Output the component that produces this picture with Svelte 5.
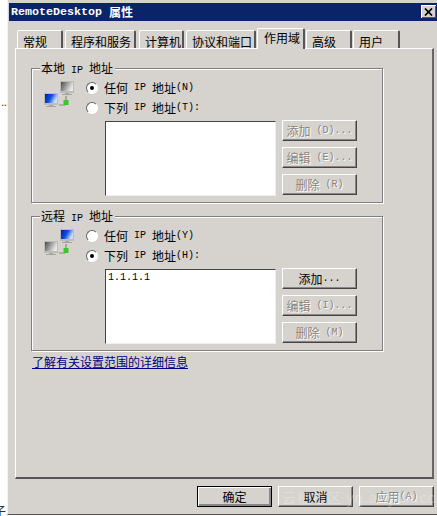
<script>
  const tabs = ['常规', '程序和服务', '计算机', '协议和端口', '作用域', '高级', '用户'];
</script>

{#snippet netIcon(topBlue)}
  <svg class="net" width="34" height="32" viewBox="0 0 34 32" aria-hidden="true">
    <defs>
      <linearGradient id={topBlue ? 'g1a' : 'g2a'} x1="0" x2="1" y1="0" y2="0.4">
        <stop offset="0" stop-color="#4a4a4a" /><stop offset="1" stop-color="#e8e8e8" />
      </linearGradient>
      <linearGradient id={topBlue ? 'b1a' : 'b2a'} x1="0" x2="1" y1="0" y2="0.4">
        <stop offset="0" stop-color="#0018b0" /><stop offset="0.55" stop-color="#1050e0" /><stop offset="1" stop-color="#c8dcff" />
      </linearGradient>
    </defs>
    <path d="M22 15v7h-1v2h-6" fill="none" stroke="#8a8a86" stroke-width="1.2" />
    <rect x="16" y="0" width="14" height="12" fill="#bdbdb8" />
    <rect x="17" y="1" width="12" height="9" fill="url(#{topBlue ? 'b1a' : 'g1a'})" />
    <path d="M21 12h4v1h3v1h-10v-1h3z" fill="#a5a5a0" />
    <rect x="0" y="12" width="14" height="12" fill="#bdbdb8" />
    <rect x="1" y="13" width="12" height="9" fill="url(#{topBlue ? 'g2a' : 'b2a'})" />
    <path d="M5 24h4v1h3v1H2v-1h3z" fill="#a5a5a0" />
    <rect x="19.5" y="19" width="5" height="5" fill="#38c828" />
  </svg>
{/snippet}

{#snippet ip()}<span class="m">&nbsp;IP&nbsp;</span>{/snippet}

{#snippet btn(label, hot, disabled)}
  <div class="btn" class:off={disabled}>{label}{#if hot}<span class="m">{hot}</span>{/if}</div>
{/snippet}

<div class="page">
  <span class="stray dots">...</span>
  <span class="stray zi">子</span>
  <div class="window">
    <div class="titlebar">
      <span class="tname">RemoteDesktop</span>
      <span class="tcn">属性</span>
      <span class="close">
        <svg width="9" height="8" viewBox="0 0 9 8"><path d="M1 0.5l7 7M8 0.5l-7 7" stroke="#000" stroke-width="1.7" /></svg>
      </span>
    </div>

    <div class="tabs">
      {#each tabs as t, i}
        <div class="tab t{i}" class:active={i === 4}>{t}</div>
      {/each}
    </div>

    <div class="panel">
      <section class="group">
        <span class="legend">本地<span class="m">&nbsp;IP&nbsp;</span>地址</span>
        <div class="icon">{@render netIcon(false)}</div>
        <div class="body">
          <div class="radio-row"><span class="radio on"></span>任何{@render ip()}地址<span class="m">(N)</span></div>
          <div class="radio-row"><span class="radio"></span>下列{@render ip()}地址<span class="m">(T):</span></div>
          <div class="pick">
            <div class="list"></div>
            <div class="btns">
              {@render btn('添加', ' (D)...', true)}
              {@render btn('编辑', ' (E)...', true)}
              {@render btn('删除', ' (R)', true)}
            </div>
          </div>
        </div>
      </section>

      <section class="group second">
        <span class="legend">远程<span class="m">&nbsp;IP&nbsp;</span>地址</span>
        <div class="icon">{@render netIcon(true)}</div>
        <div class="body">
          <div class="radio-row"><span class="radio"></span>任何{@render ip()}地址<span class="m">(Y)</span></div>
          <div class="radio-row"><span class="radio on"></span>下列{@render ip()}地址<span class="m">(H):</span></div>
          <div class="pick">
            <div class="list"><span class="entry">1.1.1.1</span></div>
            <div class="btns">
              {@render btn('添加', '...', false)}
              {@render btn('编辑', ' (I)...', true)}
              {@render btn('删除', ' (M)', true)}
            </div>
          </div>
        </div>
      </section>

      <a class="link" href="#top">了解有关设置范围的详细信息</a>
    </div>

    <div class="actions">
      <div class="btn default">确定</div>
      <div class="btn">取消</div>
      <div class="btn off">应用<span class="m"> (A)</span></div>
    </div>
    <span class="mark">云栖社区 yq.aliyun.com</span>
  </div>
</div>

<style>
  :global(body) {
    margin: 0;
    background: #fff;
  }
  .page {
    position: relative;
    width: 437px;
    height: 516px;
    overflow: hidden;
    padding-left: 7px;
    box-sizing: border-box;
    font: 12px/14px "Noto Sans CJK SC", "Liberation Sans", sans-serif;
    color: #000;
  }
  .stray {
    position: absolute;
    left: 0;
    color: #333;
  }
  .dots { top: 98px; font: 9px/12px "Liberation Mono", monospace; letter-spacing: -3px; }
  .zi { top: 504px; left: -6px; }
  .m {
    font: 10px/14px "Liberation Mono", monospace;
    white-space: pre;
  }
  .window {
    position: relative;
    width: 430px;
    height: 515px;
    box-sizing: border-box;
    background: #d6d3ce;
    border-left: 1px solid #f4f3f0;
    border-bottom: 1px solid #555;
    padding: 3px 0 0 1px;
  }
  .titlebar {
    height: 18px;
    background: #0a246a;
    color: #fff;
    display: flex;
    align-items: center;
    padding-left: 2px;
    position: relative;
  }
  .tname {
    font: bold 11.67px/18px "Liberation Mono", monospace;
  }
  .tcn {
    font-size: 12px;
    font-weight: 700;
    margin-left: 7px;
  }
  .close {
    position: absolute;
    right: 1px;
    top: 2px;
    width: 15px;
    height: 13px;
    background: #d6d3ce;
    box-shadow: inset 1px 1px 0 #fff, inset -1px -1px 0 #555;
    display: flex;
    align-items: center;
    justify-content: center;
  }
  .tabs {
    display: flex;
    height: 20px;
    margin: 7px 0 0 8px;
    align-items: flex-end;
  }
  .tab {
    height: 18px;
    box-sizing: border-box;
    border-top: 1px solid #fff;
    border-left: 1px solid #fff;
    border-right: 2px solid #555;
    border-radius: 2px 2px 0 0;
    padding: 3px 0 0 5px;
    line-height: 15px;
    white-space: nowrap;
    margin-right: 2px;
    position: relative;
  }
  .t0 { width: 46px; }
  .t1 { width: 71px; margin-right: 3px; }
  .t2 { width: 45px; margin-right: 2px; }
  .t3 { width: 70px; margin-right: 1px; }
  .t4 { width: 48px; margin-right: 1px; }
  .t5 { width: 46px; margin-right: 1px; }
  .t6 { width: 47px; margin-right: 0; }
  .tab.active {
    height: 21px;
    margin-bottom: -1px;
    background: #d6d3ce;
    padding-top: 1px;
    padding-left: 6px;
    z-index: 2;
  }
  .panel {
    width: 419px;
    height: 431px;
    margin-left: 6px;
    box-sizing: border-box;
    border-top: 1px solid #fff;
    border-left: 1px solid #fff;
    border-right: 2px solid #666;
    border-bottom: 2px solid #555;
    padding: 19px 0 0 15px;
  }
  .group {
    position: relative;
    width: 352px;
    height: 135px;
    box-sizing: border-box;
    border: 1px solid #808080;
    box-shadow: 1px 1px 0 #fff, inset 1px 1px 0 #fff;
    display: flex;
    padding: 9px 0 0 12px;
  }
  .second { margin-top: 13px; }
  .legend {
    position: absolute;
    left: 8px;
    top: -9px;
    background: #d6d3ce;
    padding: 0 2px 0 1px;
    line-height: 15px;
  }
  .icon { width: 42px; flex: none; padding-top: 3px; }
  .net { display: block; }
  .body { display: flex; flex-direction: column; }
  .radio-row {
    display: flex;
    align-items: center;
    height: 20px;
    white-space: pre;
    margin-top: 0;
  }
  .radio {
    width: 12px;
    height: 12px;
    box-sizing: border-box;
    border-radius: 50%;
    background: #fff;
    border: 1px solid;
    border-color: #666 #fff #fff #666;
    margin-right: 6px;
    position: relative;
    flex: none;
  }
  .radio.on::after {
    content: "";
    position: absolute;
    left: 3px;
    top: 3px;
    width: 4px;
    height: 4px;
    border-radius: 50%;
    background: #000;
  }
  .pick {
    display: flex;
    margin: 3px 0 0 19px;
    align-items: flex-start;
  }
  .list {
    width: 171px;
    height: 75px;
    box-sizing: border-box;
    background: #fff;
    border: 1px solid;
    border-color: #444 #eee #eee #444;
    padding: 2px 2px;
  }
  .entry {
    font: 10px/12px "Liberation Mono", monospace;
    display: block;
  }
  .btns {
    display: flex;
    flex-direction: column;
    gap: 6px;
    margin-left: 6px;
    margin-top: -1px;
  }
  .btn {
    width: 75px;
    height: 21px;
    box-sizing: border-box;
    background: #d6d3ce;
    border: 1px solid;
    border-color: #fff #444 #444 #fff;
    box-shadow: inset -1px -1px 0 #888;
    display: flex;
    align-items: center;
    justify-content: center;
    white-space: pre;
  }
  .btn.off {
    color: #88857f;
    text-shadow: 1px 1px 0 #fff;
  }
  .btn.default {
    border-color: #000;
    box-shadow: inset 1px 1px 0 #fff, inset -2px -2px 0 #888;
  }
  .link {
    display: block;
    margin-top: 4px;
    margin-left: 1px;
    color: #000080;
    width: 156px;
    line-height: 14px;
  }
  .actions {
    display: flex;
    gap: 6px;
    margin: 7px 0 0 188px;
  }
  .mark {
    position: absolute;
    left: 274px;
    top: 489px;
    font-size: 14px;
    line-height: 16px;
    letter-spacing: 1px;
    color: rgba(255, 255, 255, 0.25);
    white-space: nowrap;
  }
</style>
